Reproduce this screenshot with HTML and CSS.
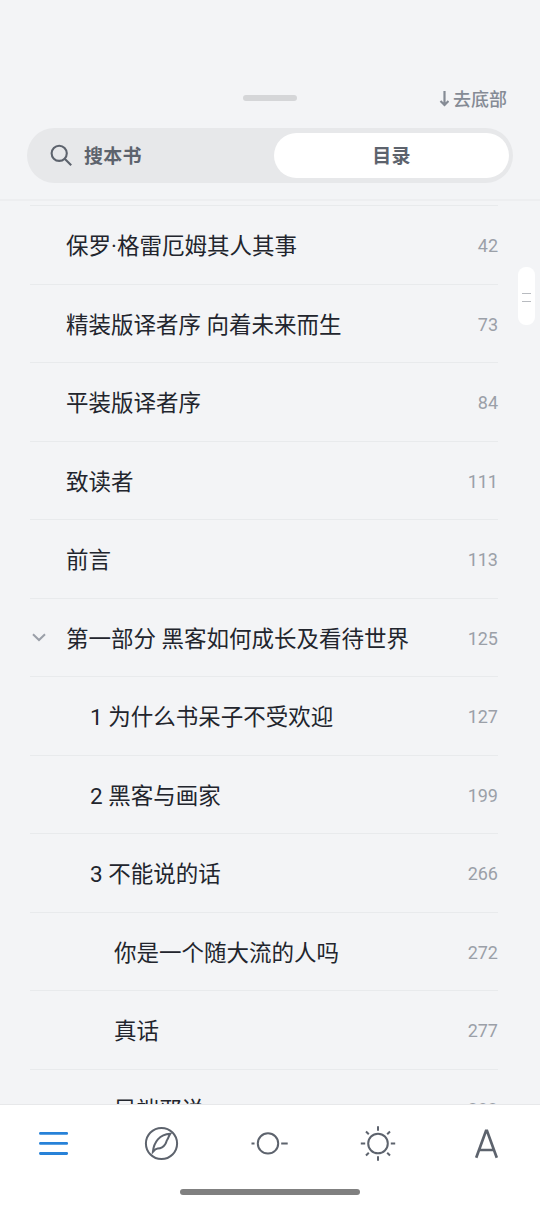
FILE: index.html
```html
<!DOCTYPE html>
<html lang="zh-CN">
<head>
<meta charset="utf-8">
<title>目录</title>
<link rel="stylesheet" href="styles.css">
</head>
<body>
<div class="screen">
  <header class="header">
    <div class="topline">
      <span class="handle"></span>
      <a class="to-bottom"><svg width="10" height="18" viewBox="0 0 10 18"><path d="M5.5 1V15M1.5 11L5.5 15L9.5 11"/></svg><span>去底部</span></a>
    </div>
    <div class="segments">
      <div class="segment search">
        <svg width="24" height="24" viewBox="0 0 24 24"><circle cx="9.2" cy="9.3" r="7.6"/><path d="M14.7 14.8L21.2 21.3"/></svg>
        <span>搜本书</span>
      </div>
      <div class="segment active">目录</div>
    </div>
  </header>
  <main class="toc">
    <ul class="list">
      <li class="row"><span class="title">保罗·格雷厄姆其人其事</span><span class="page">42</span></li>
      <li class="row"><span class="title">精装版译者序 向着未来而生</span><span class="page">73</span></li>
      <li class="row"><span class="title">平装版译者序</span><span class="page">84</span></li>
      <li class="row"><span class="title">致读者</span><span class="page">111</span></li>
      <li class="row"><span class="title">前言</span><span class="page">113</span></li>
      <li class="row open"><svg class="chevron" width="14" height="9" viewBox="0 0 14 9"><path d="M1 1.2L7 7L13 1.2"/></svg><span class="title">第一部分 黑客如何成长及看待世界</span><span class="page">125</span></li>
      <li class="row level-2"><span class="title">1 为什么书呆子不受欢迎</span><span class="page">127</span></li>
      <li class="row level-2"><span class="title">2 黑客与画家</span><span class="page">199</span></li>
      <li class="row level-2"><span class="title">3 不能说的话</span><span class="page">266</span></li>
      <li class="row level-3"><span class="title">你是一个随大流的人吗</span><span class="page">272</span></li>
      <li class="row level-3"><span class="title">真话</span><span class="page">277</span></li>
      <li class="row level-3"><span class="title">异端邪说</span><span class="page">283</span></li>
    </ul>
    <div class="scroll-thumb"></div>
  </main>
  <footer class="footer">
    <nav class="tabs">
      <svg class="tab selected" width="40" height="40" viewBox="0 0 40 40"><path d="M6.4 10.4H32.7M6.4 20.4H32.7M6.4 30.5H32.7"/></svg>
      <svg class="tab" width="40" height="40" viewBox="0 0 40 40"><g transform="translate(-.5 .5)"><circle cx="20" cy="20" r="15.6"/><path d="M11.4 28.3C12.3 19 18 10.7 28.7 10.3C27.2 12.3 27.1 14.5 25.8 16.2C24.8 17.4 25.1 18.8 23.7 20.8C21.8 23.9 19.7 25 16.1 25.1C14 25.3 12.8 26.7 11.4 28.3Z"/></g></svg>
      <svg class="tab" width="40" height="40" viewBox="0 0 40 40"><circle cx="18" cy="20.4" r="10.2"/><path d="M1.5 20.4H4.5M31.2 20.4H37.7"/></svg>
      <svg class="tab" width="40" height="40" viewBox="0 0 40 40"><g transform="translate(0 .5)"><circle cx="20" cy="20" r="9.8"/><path d="M20 2.8V7.2M20 32.8V37.2M2.8 20H7.2M32.8 20H37.2M8 8L10.8 10.8M29.2 29.2L32 32M8 32L10.8 29.2M29.2 10.8L32 8"/></g></svg>
      <svg class="tab" width="40" height="40" viewBox="0 0 40 40"><path class="letter-stroke" d="M10.2 34.8L20 7.8H21L30.8 34.8M13.2 27H27.8"/></svg>
    </nav>
    <div class="home-bar"></div>
  </footer>
</div>
</body>
</html>
```

FILE: styles.css
```css
* { box-sizing: border-box; }
body { margin: 0; background: #f3f4f6; font-family: Roboto, "Noto Sans CJK SC", sans-serif; }
svg { display: block; fill: none; stroke: #5d636d; flex: none; }
.screen { width: 540px; height: 1206px; display: flex; flex-direction: column; overflow: hidden; }

.header { height: 201px; padding: 86px 27px 0; border-bottom: 2px solid #edeef0; flex: none; }
.topline { height: 42px; display: grid; grid-template-columns: 1fr 54px 1fr; }
.handle { grid-column: 2; width: 54px; height: 6px; margin-top: 9.4px; border-radius: 3px; background: #d5d6d8; }
.to-bottom { display: flex; justify-content: flex-end; gap: 4px; height: 26px; line-height: 26px; padding: 1px 6px 0 0; font-size: 18px; font-weight: 500; color: #858b95; }
.to-bottom svg { margin-top: 3px; stroke: #858b95; stroke-width: 2.2; }
.segments { height: 55px; width: 486px; padding: 5px 4px 5px 0; display: flex; border-radius: 28px; background: #e7e8ea; }
.segment { display: flex; align-items: center; padding-bottom: 2px; font-size: 19px; font-weight: 700; color: #5d636d; letter-spacing: .3px; }
.search { width: 247px; padding-left: 23px; gap: 10px; }
.search svg { margin-top: 3px; stroke-width: 2.1; }
.active { width: 235px; justify-content: center; border-radius: 23px; background: #fff; }

.toc { flex: 1; min-height: 0; overflow: hidden; position: relative; padding: 4px 42px 0 30px; }
.list { margin: 0; padding: 0; list-style: none; border-top: 1px solid #e8eaec; }
.row { height: 78.5px; display: flex; align-items: center; padding: 3px 0 0 36px; border-bottom: 1px solid #e8eaec; color: #22252d; }
.open { padding-left: 2px; }
.chevron { margin: -3px 20px 0 0; stroke: #9a9fa8; stroke-width: 2; }
.level-2 { padding-left: 60px; }
.level-3 { padding-left: 84px; }
.title { font-size: 22.5px; line-height: 34px; white-space: nowrap; }
.page { margin: -1px 0 0 auto; font-size: 18px; color: #9ba0a8; }
.scroll-thumb { position: absolute; right: 5px; top: 66px; width: 17px; height: 58px; padding: 26px 4px; border-radius: 8px; background: #fff; }
.scroll-thumb::before { content: ""; display: block; height: 7px; border: solid #b8bbc0; border-width: 1px 0; }

.footer { height: 102px; flex: none; border-top: 1px solid #e7e8ea; background: #fff; }
.tabs { display: flex; justify-content: space-between; padding: 18px 34px 0; }
.tab { stroke-width: 2; }
.selected { stroke: #2882d8; stroke-width: 2.8; stroke-linecap: round; }
.letter-stroke { stroke-width: 2.7; }
.home-bar { width: 180px; height: 6px; margin: 26.4px auto 0; border-radius: 3px; background: #808080; }
```
